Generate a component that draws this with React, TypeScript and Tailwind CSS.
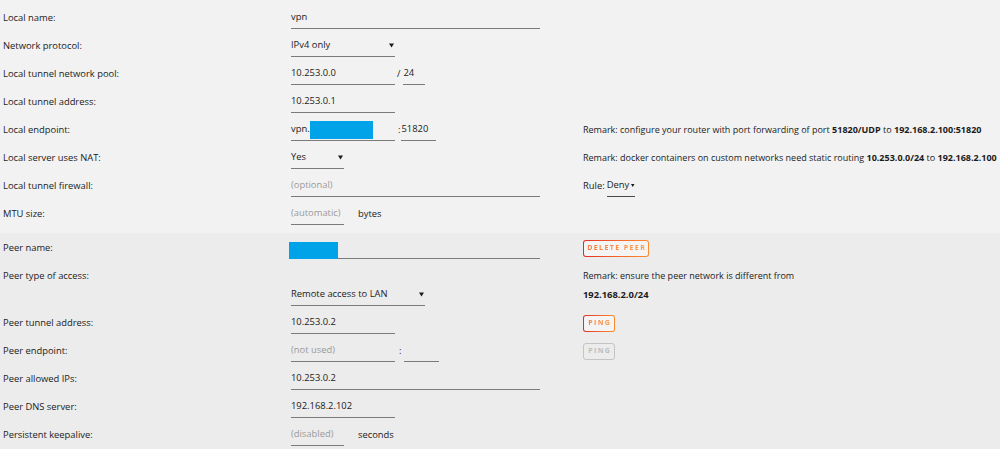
import React from "react";

const Arrow = ({ className = "" }: { className?: string }) => (
  <svg width="5" height="5" viewBox="0 0 5 5" className={className}>
    <path d="M0 0.5 L5 0.5 L2.5 4.5 Z" fill="#1c1b1b" />
  </svg>
);

const Field = ({
  w,
  children,
  placeholder,
}: {
  w: string;
  children?: React.ReactNode;
  placeholder?: boolean;
}) => (
  <div
    className={`${w} h-[22px] flex items-center border-b border-[#7a7a7a] ${
      placeholder ? "text-[#9a9a9a]" : ""
    }`}
  >
    {children}
  </div>
);

const Select = ({ w, label }: { w: string; label: string }) => (
  <div className={`${w} h-[22px] flex items-center justify-between pr-[1px] border-b border-[#7a7a7a]`}>
    <span>{label}</span>
    <Arrow />
  </div>
);

const Row = ({
  label,
  children,
  remark,
}: {
  label: string;
  children?: React.ReactNode;
  remark?: React.ReactNode;
}) => (
  <div className="grid grid-cols-[291px_292px_1fr] h-[28px] items-center">
    <div className="pl-[3px]">{label}</div>
    <div className="flex items-center">{children}</div>
    <div className="whitespace-nowrap">{remark}</div>
  </div>
);

const GradButton = ({ label, w, disabled }: { label: string; w: string; disabled?: boolean }) =>
  disabled ? (
    <div className={`${w} h-[17px] rounded-[3px] border border-[#c4c4c4] flex items-center justify-center`}>
      <span className="text-[7px] font-bold tracking-[1.4px] text-[#bdbdbd] pl-[1.4px]">{label}</span>
    </div>
  ) : (
    <div className={`${w} h-[17px] rounded-[3px] p-px bg-gradient-to-r from-[#e22828] to-[#ff8c2f]`}>
      <div className="h-full w-full rounded-[2px] bg-[#f4f4f4] flex items-center justify-center">
        <span className="text-[7px] font-bold tracking-[1.4px] bg-gradient-to-r from-[#f47a3c] to-[#ff9a45] bg-clip-text text-transparent pl-[1.4px]">
          {label}
        </span>
      </div>
    </div>
  );

export default function App() {
  return (
    <div className="w-[1000px] h-[449px] overflow-hidden bg-[#f2f2f2] text-[#1c1b1b] text-[9.4px] font-['Open_Sans',sans-serif]">
      <div className="pt-[4px] pb-[5px]">
        <Row label="Local name:">
          <Field w="w-[249px]">vpn</Field>
        </Row>
        <Row label="Network protocol:">
          <Select w="w-[104px]" label="IPv4 only" />
        </Row>
        <Row label="Local tunnel network pool:">
          <Field w="w-[104px]">10.253.0.0</Field>
          <span className="ml-[2px] mr-[3px]">/</span>
          <Field w="w-[22px]">24</Field>
        </Row>
        <Row label="Local tunnel address:">
          <Field w="w-[104px]">10.253.0.1</Field>
        </Row>
        <Row
          label="Local endpoint:"
          remark={
            <span className="text-[9px]">
              Remark: configure your router with port forwarding of port <b>51820/UDP</b> to{" "}
              <b>192.168.2.100:51820</b>
            </span>
          }
        >
          <Field w="w-[104px]">
            <span>vpn.</span>
            <span className="inline-block w-[63px] h-[18px] bg-[#00a3e8] mt-[1px]"></span>
          </Field>
          <span className="ml-[3px] mr-[1px]">:</span>
          <Field w="w-[35px]">51820</Field>
        </Row>
        <Row
          label="Local server uses NAT:"
          remark={
            <span className="text-[9px]">
              Remark: docker containers on custom networks need static routing <b>10.253.0.0/24</b> to{" "}
              <b>192.168.2.100</b>
            </span>
          }
        >
          <Select w="w-[53px]" label="Yes" />
        </Row>
        <Row
          label="Local tunnel firewall:"
          remark={
            <div className="flex items-center">
              <span className="mr-[2px]">Rule:</span>
              <div className="w-[28px] h-[22px] flex items-center gap-[2px] border-b border-[#4a4a4a]">
                <span>Deny</span>
                <Arrow />
              </div>
            </div>
          }
        >
          <Field w="w-[249px]" placeholder>
            (optional)
          </Field>
        </Row>
        <Row label="MTU size:">
          <Field w="w-[53px]" placeholder>
            (automatic)
          </Field>
          <span className="ml-[14px]">bytes</span>
        </Row>
      </div>

      <div className="bg-[#ececec] pt-[1px] h-full">
        <Row label="Peer name:" remark={<GradButton label="DELETE PEER" w="w-[66px]" />}>
          <div className="w-[249px] h-[22px] border-b border-[#7a7a7a] relative">
            <span className="absolute left-[-2px] top-[5px] w-[49px] h-[17px] bg-[#00a3e8]"></span>
          </div>
        </Row>
        <div className="grid grid-cols-[291px_292px_1fr] h-[47px]">
          <div className="pl-[3px] pt-[7px]">Peer type of access:</div>
          <div className="pt-[22px]">
            <Select w="w-[134px]" label="Remote access to LAN" />
          </div>
          <div className="pt-[7px] whitespace-nowrap text-[9px]">
            <div className="leading-[13px]">Remark: ensure the peer network is different from</div>
            <div className="font-bold mt-[6px] leading-[13px] text-[9.4px]">192.168.2.0/24</div>
          </div>
        </div>
        <Row label="Peer tunnel address:" remark={<GradButton label="PING" w="w-[32px]" />}>
          <Field w="w-[104px]">10.253.0.2</Field>
        </Row>
        <Row label="Peer endpoint:" remark={<GradButton label="PING" w="w-[32px]" disabled />}>
          <Field w="w-[104px]" placeholder>
            (not used)
          </Field>
          <span className="ml-[4px] mr-[3px]">:</span>
          <Field w="w-[35px]"></Field>
        </Row>
        <Row label="Peer allowed IPs:">
          <Field w="w-[249px]">10.253.0.2</Field>
        </Row>
        <Row label="Peer DNS server:">
          <Field w="w-[104px]">192.168.2.102</Field>
        </Row>
        <Row label="Persistent keepalive:">
          <Field w="w-[53px]" placeholder>
            (disabled)
          </Field>
          <span className="ml-[14px]">seconds</span>
        </Row>
      </div>
    </div>
  );
}
